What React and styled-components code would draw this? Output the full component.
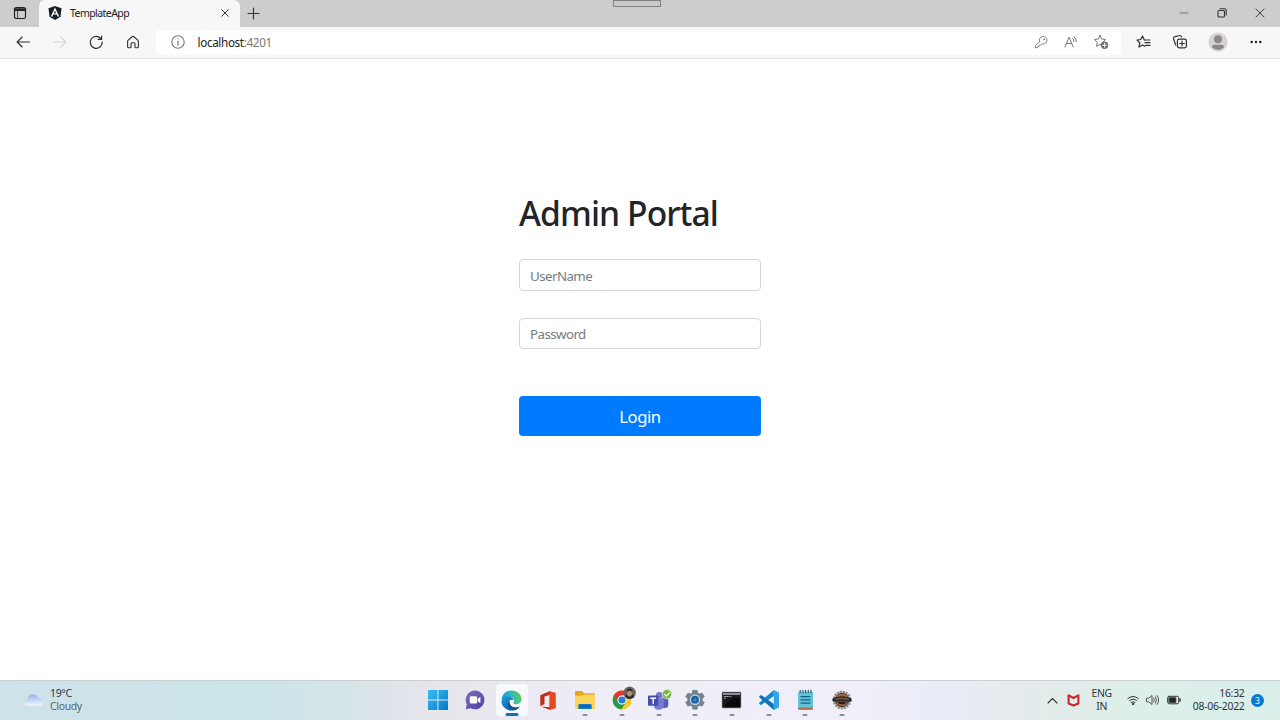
import React from 'react';
import styled, { createGlobalStyle } from 'styled-components';

const Global = createGlobalStyle`
  * { box-sizing: border-box; }
  body { margin: 0; background: #fff; font-family: "Noto Sans", "Open Sans", sans-serif; overflow: hidden; }
`;

const Screen = styled.div`
  width: 1280px;
  height: 720px;
  display: flex;
  flex-direction: column;
  background: #fff;
`;

const TabBar = styled.div`
  position: relative;
  height: 27px;
  display: flex;
  align-items: center;
  padding-bottom: 1px;
  background: #cdcdcd;
`;

const TabMenu = styled.div`
  width: 39px;
  display: flex;
  padding-left: 13px;
`;

const Tab = styled.div`
  width: 201px;
  height: 27px;
  display: flex;
  align-items: center;
  align-self: flex-start;
  padding: 0 11px 1px 9px;
  background: #f7f7f7;
  border-radius: 6px 6px 0 0;
`;

const TabTitle = styled.span`
  flex: 1;
  padding-left: 8px;
  font-size: 10.5px;
  letter-spacing: -0.55px;
  line-height: 16px;
  color: #222;
`;

const NewTab = styled.div`
  display: flex;
  padding-left: 7px;
`;

const GrabHandle = styled.div`
  position: absolute;
  left: 613px;
  top: 0;
  width: 48px;
  height: 7px;
  border: 1px solid #808080;
  background: #c9c9c9;
`;

const WindowControls = styled.div`
  display: flex;
  gap: 26px;
  align-items: center;
  margin-left: auto;
  padding-right: 14px;
`;

const Toolbar = styled.div`
  height: 32px;
  display: flex;
  align-items: center;
  background: #f7f7f7;
  border-bottom: 1px solid #e4e4e4;
`;

const NavButtons = styled.div`
  width: 156px;
  display: flex;
  gap: 20.6px;
  padding: 0 0 1px 15px;
`;

const AddressBar = styled.div`
  width: 965px;
  height: 25px;
  display: flex;
  align-items: center;
  padding: 0 12px 1px 14px;
  background: #fff;
  border-radius: 4px;
`;

const Url = styled.span`
  flex: 1;
  padding-left: 11.5px;
  font-size: 11.7px;
  letter-spacing: -0.35px;
  line-height: 16px;
  color: #222;
`;

const Port = styled.span`
  color: #777;
`;

const AddressActions = styled.div`
  display: flex;
  gap: 14px;
`;

const ToolbarActions = styled.div`
  display: flex;
  align-items: center;
  flex: 1;
  justify-content: space-between;
  padding: 0 16px 1px 15px;
`;

const Page = styled.main`
  flex: 1;
  display: flex;
  justify-content: center;
  align-items: flex-start;
  padding-top: 133px;
`;

const LoginForm = styled.form`
  width: 242px;
  display: flex;
  flex-direction: column;
`;

const Heading = styled.h1`
  margin: 0 0 24px;
  height: 43px;
  font-size: 33.6px;
  font-weight: 500;
  line-height: 43px;
  letter-spacing: -0.9px;
  white-space: nowrap;
  color: #212529;
`;

const Field = styled.input`
  width: 100%;
  height: ${p => p.$height}px;
  margin: 0 0 ${p => p.$gap}px;
  padding: 1px 10px 0;
  font: 13.3px "Noto Sans", sans-serif;
  letter-spacing: -0.55px;
  border: 1px solid #d3d7dc;
  border-radius: 4px;
  outline: 0;
  background: #fff;
  &::placeholder { color: #747c84; opacity: 1; }
`;

const LoginButton = styled.button`
  width: 100%;
  height: 40px;
  padding: 1px 0 0;
  border: 0;
  border-radius: 4px;
  background: #007bff;
  color: #fff;
  font: 16.7px "Noto Sans", sans-serif;
  letter-spacing: -0.45px;
`;

const Taskbar = styled.footer`
  height: 40px;
  display: flex;
  align-items: center;
  padding-bottom: 1px;
  border-top: 1px solid #c9d0d4;
  background: linear-gradient(90deg, #cde2e9 0, #cbe5e8 260px, #d6e4e8 350px, #e6e5eb 430px, #efeef7 600px, #f0eff9 860px, #e8ecf6 950px, #e5ebec 1030px, #dcefe8 1140px, #daeeeb 1280px);
`;

const Weather = styled.div`
  width: 420px;
  display: flex;
  align-items: center;
  gap: 6px;
  padding-left: 23px;
`;

const Lines = styled.div`
  display: flex;
  flex-direction: column;
  align-items: ${p => p.$align || 'flex-start'};
  font-size: 10.4px;
  line-height: 13px;
  letter-spacing: ${p => p.$spacing || 0}px;
  color: #2c3339;
`;

const Muted = styled.span`
  color: #59656c;
`;

const Apps = styled.div`
  display: flex;
  gap: 4.7px;
`;

const AppSlot = styled.div`
  position: relative;
  width: 32px;
  height: 32px;
  margin-left: ${p => p.$first ? 2.4 : 0}px;
  display: flex;
  align-items: center;
  justify-content: center;
  border-radius: 4px;
  background: ${p => p.$active ? '#f8f9fd' : 'transparent'};
`;

const Indicator = styled.i`
  position: absolute;
  bottom: 0;
  left: 50%;
  width: ${p => p.$active ? 13 : 5}px;
  height: ${p => p.$active ? 3 : 2.5}px;
  transform: translateX(-50%);
  border-radius: 2px;
  background: ${p => p.$active ? '#1573b4' : '#8a8a90'};
`;

const Tray = styled.div`
  flex: 1;
  display: flex;
  align-items: center;
  justify-content: flex-end;
  padding-right: 16px;
`;

const TrayItem = styled.div`
  display: flex;
  margin-right: ${p => p.$gap}px;
`;

const Badge = styled.div`
  width: 13px;
  height: 13px;
  border-radius: 50%;
  background: #0879d1;
  color: #fff;
  font-size: 8.5px;
  line-height: 13px;
  text-align: center;
`;

const Svg = styled.svg.attrs(p => ({ viewBox: p.viewBox || '0 0 16 16' }))`
  display: block;
  flex: none;
  width: ${p => p.$w || 16}px;
  height: ${p => p.$h || p.$w || 16}px;
  overflow: visible;
  fill: none;
  stroke: ${p => p.$c || 'none'};
  stroke-width: ${p => p.$s || 1.1};
  stroke-linecap: round;
  stroke-linejoin: round;
`;

const DARK = '#303030';
const GREY = '#777';

const TabMenuIcon = () => (
  <Svg $w={14} viewBox="0 0 14 14" $c="#222" $s={1.2}>
    <rect x="1.5" y="1.5" width="11" height="11" rx="1.8" />
    <path d="M1.5 3h11M2 4.2h10" strokeWidth="1.6" /><path d="M4.6 4.5v8" strokeWidth=".8" />
  </Svg>
);

const AngularIcon = () => (
  <Svg $w={14} $h={14} viewBox="0 0 14 14">
    <path d="M7 0l6.5 2.3-1 8.4L7 14l-5.5-3.3-1-8.4z" fill="#172027" />
    <path d="M7 1.6l4.2 9H9.6L8.7 8.5H5.3l-.9 2.1H2.8zM7 4.6L5.9 7.2h2.2z" fill="#fff" fillRule="evenodd" />
  </Svg>
);

const CloseIcon = ({ size }) => (
  <Svg $w={size} viewBox="0 0 8 8" $c="#333" $s={1}><path d="M.7.7l6.6 6.6M7.3.7L.7 7.3" /></Svg>
);

const StarPath = 'M7 1.3l1.7 3.7 4 .5-3 2.8.8 4L7 10.3l-3.5 2 .8-4-3-2.8 4-.5z';

const NavIcons = () => (
  <NavButtons>
    <Svg $c={DARK}><path d="M14.5 8H2.2M7.2 3L2.1 8l5.1 5" /></Svg>
    <Svg $c="#d5d5d5"><path d="M1.5 8h12.3M8.8 3l5.1 5-5.1 5" /></Svg>
    <Svg $c={DARK} $s={1.2}><path d="M13.2 5A6 6 0 1 0 14.2 8M13.6 2v3.4h-3.5" /></Svg>
    <Svg $c={DARK}><path d="M2.6 7.4Q2.6 6.8 3 6.4L7.4 2.5q.6-.5 1.2 0L13 6.4q.4.4.4 1v5.4q0 1-1 1h-1.7q-.7 0-.7-.8V9.7q0-1-1-1H7q-1 0-1 1V13q0 .8-.8.8H3.6q-1 0-1-1z" /></Svg>
  </NavButtons>
);

const WindowsIcon = () => (
  <Svg $w={20} viewBox="0 0 20 20">
    <defs><linearGradient id="win" x1="0" y1="0" x2="1" y2="1" gradientUnits="objectBoundingBox"><stop stopColor="#37c0ee" /><stop offset="1" stopColor="#0878ca" /></linearGradient></defs>
    <path d="M0 0h9.4v9.4H0zM10.4 0H20v9.4h-9.6zM0 10.4h9.4V20H0zM10.4 10.4H20V20h-9.6z" fill="url(#win)" />
  </Svg>
);

const ChatIcon = () => (
  <Svg $w={20} viewBox="0 0 20 20">
    <defs><linearGradient id="chat" x2="1" y2="1"><stop stopColor="#7b6fc0" /><stop offset="1" stopColor="#4b43a5" /></linearGradient></defs>
    <path d="M10 .5a9.4 9.4 0 1 1-4.2 17.8L.7 19.3 1.8 14.5A9.4 9.4 0 0 1 10 .5z" fill="url(#chat)" />
    <rect x="4.8" y="6.3" width="7.3" height="7.2" rx="1.3" fill="#fff" /><path d="M12.7 8.7l2.7-2v6.5l-2.7-2z" fill="#fff" />
  </Svg>
);

const EdgeIcon = () => (
  <Svg $w={21} viewBox="0 0 21 21">
    <defs>
      <linearGradient id="edgeTop" x1="0" y1=".5" x2="1" y2=".3"><stop stopColor="#1697d8" /><stop offset=".5" stopColor="#30b9bd" /><stop offset="1" stopColor="#65cf53" /></linearGradient>
      <linearGradient id="edgeLow" x2="1" y2="1"><stop stopColor="#1b9ce0" /><stop offset="1" stopColor="#0c4c94" /></linearGradient>
    </defs>
    <path d="M.6 9.3C1.4 3.8 5.5.4 10.6.4 16.6.4 20.6 4.7 20.6 9c0 3.1-2.4 5.2-5.4 5.2-2.7 0-3.4-1-2.4-2.3 1.2-2-.3-4.7-4-4.7C4.9 7.2 2 8.5.6 9.3z" fill="url(#edgeTop)" />
    <path d="M.5 11C.9 7.8 4.2 5.8 8.4 6.7c2.5.5 4.3 2 4.5 3.8-1.2-1-3-1-4.1.1-1.8 1.8.2 6.4 4.6 7 2.3.3 4-.4 5.3-1.1-1.8 2.9-4.8 4.1-7.7 4.1C4.9 20.6.2 15.9.5 11z" fill="url(#edgeLow)" />
    <path d="M8.4 10.9C4.7 14.4 8 20 12.2 20.3c2.7-.3 4.8-1.5 6.5-3.8-3.4 1.7-7.9 1.1-9.6-2.1-.5-1-.7-2.4-.7-3.5z" fill="#155092" />
  </Svg>
);

const OfficeIcon = () => (
  <Svg $w={16} $h={19} viewBox="0 0 16 19">
    <defs><linearGradient id="office" x2="0" y2="1"><stop stopColor="#f06c2b" /><stop offset="1" stopColor="#bd2415" /></linearGradient></defs>
    <path d="M.5 4.3L9.8.3l5.7 1.8v14.8l-5.7 1.8-9.1-3.3 8.8.9V4L4.3 5.4v7.7L.5 14.8z" fill="url(#office)" />
    <path d="M.5 4.3L9.8.3v3.1L4.3 5.4v7.7L.5 14.8z" fill="#b92e1d" /><path d="M9.8.3l5.7 1.8v14.8l-5.7 1.8z" fill="#e8481f" />
  </Svg>
);

const FolderIcon = () => (
  <Svg $w={20} $h={18} viewBox="0 0 20 18">
    <path d="M0 1Q0 0 1 0h6l2.2 2.2H19q1 0 1 1V10H0z" fill="#e9a41e" /><path d="M0 4.8h7.3L9 3.4h10q1 0 1 1V17q0 1-1 1H1q-1 0-1-1z" fill="#ffd45a" />
    <path d="M3.3 18v-3.5q0-1.4 1.4-1.4h10.6q1.4 0 1.4 1.4V18z" fill="#1277c7" /><path d="M6 15.3h8" stroke="#075493" />
  </Svg>
);

const ChromeIcon = () => (
  <Svg $w={20} $h={20} viewBox="0 2 20 20">
    <circle cx="10" cy="12" r="9.4" fill="#fbc823" />
    <path d="M10 12L1.9 7.3A9.4 9.4 0 0 0 9.2 21.4L14 14.2z" fill="#249a4b" />
    <path d="M1.8 7.3A9.4 9.4 0 0 1 18.1 7.3H10L6 14.3z" fill="#e13a2d" />
    <circle cx="10" cy="12" r="4.6" fill="#fff" /><circle cx="10" cy="12" r="3.6" fill="#287de1" />
    <circle cx="17.6" cy="4.8" r="6.2" fill="#66645d" /><path d="M12.6 8.4c1-2 2.6-2.4 5-2.4s4 1 4.8 2.8c-2.8 2.9-7 2.9-9.8-.4z" fill="#30343a" />
    <ellipse cx="17.5" cy="4.9" rx="2.5" ry="3.4" fill="#b88b76" /><path d="M14.8 4.2C14.2-.4 21-.3 20.2 4.2 19 2.4 16.5 2.2 14.8 4.2z" fill="#29251f" />
  </Svg>
);

const TeamsIcon = () => (
  <Svg $w={21} $h={20} viewBox="0 .5 21 20">
    <circle cx="11.3" cy="5.8" r="3.4" fill="#7079d2" /><circle cx="17" cy="7" r="2.3" fill="#545cba" />
    <path d="M14 8.8h6.3v6.5q0 3.2-3.3 3.2h-3z" fill="#565eb8" /><path d="M5.8 8.8h10v6.6q0 4.8-5.3 4.8-4.7 0-4.7-4.8z" fill="#747dd5" />
    <rect x="0" y="6" width="10.3" height="10.3" rx="1" fill="#464cad" /><path d="M2.8 8.7h4.8M5.2 8.7v5.4" stroke="#fff" strokeWidth="1.4" />
    <circle cx="19" cy="4.7" r="4.7" fill="#75b83d" stroke="#dcefd0" strokeWidth=".7" /><path d="M16.7 4.9l1.7 1.7 3-3.2" stroke="#fff" strokeWidth="1.3" />
  </Svg>
);

const SettingsIcon = () => (
  <Svg $w={20} viewBox="0 0 20 20">
    <path d="M8 .4h4l.7 2.8 1.6.9 2.8-.9 2 3.5-2 2v1.8l2 2-2 3.5-2.8-.8-1.6 1-.7 2.9H8l-.7-2.9-1.6-1-2.8.8-2-3.5 2-2V8.7l-2-2 2-3.5 2.8.9 1.6-.9z" fill="#75818b" stroke="#75818b" strokeWidth="1" />
    <circle cx="10" cy="9.7" r="5.2" fill="#c7d6df" /><circle cx="10" cy="9.7" r="3.9" fill="#1762a5" /><circle cx="10" cy="9.7" r="1.5" fill="#438fca" />
  </Svg>
);

const TerminalIcon = () => (
  <Svg $w={19} $h={16} viewBox="0 0 19 16">
    <rect width="19" height="16" rx="1" fill="#17191d" stroke="#909399" strokeWidth=".6" /><path d="M1 1h17v2H1z" fill="#8d9095" />
    <path d="M2.2 4.5h2M5 4.5h1.5M8 4.5h1M2.2 6.3h1.5" stroke="#d9dbdd" strokeWidth=".7" /><path d="M1 15l10-9h7v9z" fill="#08090b" />
  </Svg>
);

const CodeIcon = () => (
  <Svg $w={20} viewBox="0 0 20 20">
    <path d="M14.8 0L20 2.4v15.2L14.8 20 5.5 11.5 2 14.4.2 13.5V6.7L2 5.8l3.5 2.8z" fill="none" />
    <path d="M14.8 0v6L2 15.2.2 13.7v-1z" fill="#1389ca" />
    <path d="M2 4.9l12.8 9.2V20L.2 7.2V6.3z" fill="#1270b7" />
    <path d="M14.8 0L20 2.4v15.2L14.8 20z" fill="#31a5e9" />
  </Svg>
);

const NotepadIcon = () => (
  <Svg $w={15} $h={20} viewBox="0 0 15 20">
    <rect x="0" y="1.7" width="15" height="18" rx="1.2" fill="#61c3dc" /><path d="M.2 17.6h14.6v.9q0 1.3-1.3 1.3H1.2Q0 19.8.2 18z" fill="#b8713d" />
    <path d="M2.2.3v2.5M4.9.3v2.5M7.6.3v2.5M10.3.3v2.5M13 .3v2.5" stroke="#17566d" strokeWidth="1.1" /><path d="M3 6.7h9M3 9.9h9M3 13.1h9" stroke="#145f7d" strokeWidth="1.3" />
  </Svg>
);

const GearBadgeIcon = () => (
  <Svg $w={20} viewBox="0 0 20 20">
    <circle cx="10" cy="10" r="8.4" fill="#b7b5b0" stroke="#858580" strokeWidth="2" strokeDasharray="1.8 1.3" strokeLinecap="butt" />
    <circle cx="10" cy="10" r="6.5" fill="#604033" stroke="#383130" /><path d="M5 6.8c3-2.5 7-2.5 10 0M5 13c3 3 7 3 10 0" stroke="#a6633e" strokeWidth="1.7" />
    <path d="M2.2 9.8q8-2.5 15.6 0" stroke="#202631" strokeWidth="3.8" /><path d="M3.5 9.5q6.5-2 13 0" stroke="#b9824e" strokeWidth="1.4" strokeDasharray="1.2 .8" strokeLinecap="butt" /><path d="M7.5 13h5" stroke="#2a211e" strokeWidth="2" />
  </Svg>
);

const apps = [WindowsIcon, ChatIcon, EdgeIcon, OfficeIcon, FolderIcon, ChromeIcon, TeamsIcon, SettingsIcon, TerminalIcon, CodeIcon, NotepadIcon, GearBadgeIcon];

function Browser() {
  return (
    <>
      <TabBar>
        <TabMenu><TabMenuIcon /></TabMenu>
        <Tab><AngularIcon /><TabTitle>TemplateApp</TabTitle><CloseIcon size={8} /></Tab>
        <NewTab><Svg $w={13} viewBox="0 0 13 13" $c="#333"><path d="M6.5 1v11M1 6.5h11" /></Svg></NewTab>
        <GrabHandle />
        <WindowControls>
          <Svg $w={12} viewBox="0 0 12 12" $c="#777"><path d="M2 6h8" /></Svg>
          <Svg $w={12} viewBox="0 0 12 12" $c="#333"><rect x="2" y="3.5" width="6.5" height="6.5" rx="1" /><path d="M4 1.8h4.5q1.7 0 1.7 1.7V8" /></Svg>
          <Svg $w={12} viewBox="0 0 12 12" $c="#444" $s={1}><path d="M2 2l8 8M10 2l-8 8" /></Svg>
        </WindowControls>
      </TabBar>
      <Toolbar>
        <NavIcons />
        <AddressBar>
          <Svg $c={GREY}><circle cx="8" cy="8" r="6.2" /><path d="M8 7.2v4M8 4.8v.1" strokeWidth="1.2" /></Svg>
          <Url>localhost<Port>:4201</Port></Url>
          <AddressActions>
            <Svg $c={GREY} $s={0.9}><path d="M6.6 7.5a3.8 3.8 0 1 1 2.5 2.3l-1.4 1.3H6.2v1.3H4.9v1.3H2.5v-2.1z" /><circle cx="11.1" cy="5.3" r=".5" /></Svg>
            <Svg $c={GREY} $s={1}><path d="M2 13L6.1 3.1 10.2 13M3.5 9.4h5.2M9.6 4.4q1.5 1.1 1.4 3M11 2.8q2.6 1.7 2.4 4.7" /></Svg>
            <Svg $c={GREY} $s={1}><path d={StarPath} /><circle cx="11.5" cy="11.3" r="3.7" fill="#707070" stroke="none" /><path d="M11.5 9.5v3.6M9.7 11.3h3.6" stroke="#fff" /></Svg>
          </AddressActions>
        </AddressBar>
        <ToolbarActions>
          <Svg $c={DARK} $s={1.2}><path d="M9.3 6.1L8.2 5.8 6.5 2 4.7 5.5l-3.7.6 2.8 2.6-.8 4.4 3.5-2.1 2.2 1.3M9.3 6h4.7M9 8.7h5M9.5 11.4h4.5" /></Svg>
          <Svg $c={DARK} $s={1.2}><rect x="5.4" y="5.1" width="9" height="8.8" rx="1.8" /><path d="M10 7.2v4.6M7.7 9.5h4.6M3.6 10.9L1.6 5Q1 3.3 2.7 2.7l4.5-1.1Q9 1.1 9.7 3" /></Svg>
          <Svg $w={20} viewBox="0 0 20 20"><circle cx="10" cy="10" r="9.5" fill="#d5d2cf" /><circle cx="10" cy="7.2" r="4" fill="#8b8987" /><path d="M4 15.2q0-2.5 2.5-2.5h7q2.5 0 2.5 2.5-5.3 5.7-12 0z" fill="#8b8987" /></Svg>
          <Svg><g fill="#222"><circle cx="3.7" cy="8" r="1.2" /><circle cx="8" cy="8" r="1.2" /><circle cx="12.3" cy="8" r="1.2" /></g></Svg>
        </ToolbarActions>
      </Toolbar>
    </>
  );
}

export default function App() {
  return (
    <Screen>
      <Global />
      <Browser />
      <Page>
        <LoginForm>
          <Heading>Admin Portal</Heading>
          <Field placeholder="UserName" $height={32} $gap={27} />
          <Field placeholder="Password" type="password" $height={31} $gap={47} />
          <LoginButton type="button">Login</LoginButton>
        </LoginForm>
      </Page>
      <Taskbar>
        <Weather>
          <Svg $w={21} $h={13} viewBox="0 0 21 13">
            <defs><linearGradient id="cloud" x2="0" y2="1"><stop stopColor="#8fb5e8" /><stop offset=".55" stopColor="#c4d8f5" /><stop offset="1" stopColor="#f5f5fc" /></linearGradient></defs>
            <path d="M4.5 11.8C-.8 11.8-.4 5.8 4.3 5.6 5.2-1.2 14.2-1.4 15.5 4.6c6-.6 6.8 7.2 1.5 7.2z" fill="url(#cloud)" />
          </Svg>
          <Lines $spacing={-0.3}><span>19°C</span><Muted>Cloudy</Muted></Lines>
        </Weather>
        <Apps>
          {apps.map((Icon, i) => (
            <AppSlot key={i} $first={i === 0} $active={i === 2}>
              <Icon />
              {(i === 2 || i > 3) && <Indicator $active={i === 2} />}
            </AppSlot>
          ))}
        </Apps>
        <Tray>
          <TrayItem $gap={9}><Svg $w={11} $h={7} viewBox="0 0 11 7" $c="#333"><path d="M1 6l4.5-4.5L10 6" /></Svg></TrayItem>
          <TrayItem $gap={12}><Svg $w={13} $h={14} viewBox="0 0 13 14" $c="#c52733" $s={2.1}><path d="M1.6 2.3v8.2l4.9 2 4.9-2V2.3L6.5 5z" /></Svg></TrayItem>
          <TrayItem $gap={15}><Lines $align="center" $spacing={-0.3}><span>ENG</span><span>IN</span></Lines></TrayItem>
          <TrayItem $gap={7}><Svg $w={12} $h={12} viewBox="0 0 12 12" $c="#333" $s={1}><path d="M.8 4.5q5.2-4.2 10.4 0M2.5 6.5q3.5-2.8 7 0M4.1 8.4q1.9-1.5 3.8 0" /><circle cx="6" cy="10" r=".7" fill="#333" /></Svg></TrayItem>
          <TrayItem $gap={8}><Svg $w={13} $h={12} viewBox="0 0 13 12" $c="#444" $s={0.9}><path d="M.8 4.2h2L6 1.5v9L2.8 7.8h-2zM7.8 4.2q1.2 1.8 0 3.6M9.5 2.8q2.1 3.2 0 6.4M11.2 1.5q3 4.5 0 9" /></Svg></TrayItem>
          <TrayItem $gap={12}><Svg $w={14} $h={10} viewBox="0 0 14 10" $c="#333" $s={1}><rect x=".7" y="1.3" width="11" height="7.5" rx="1.5" /><path d="M2.3 2.8h6.5v4.5H2.3z" fill="#222" /><path d="M13 4v2" strokeWidth="1.5" /></Svg></TrayItem>
          <TrayItem $gap={6.5}><Lines $align="flex-end" $spacing={-0.26}><span>16:32</span><span>08-06-2022</span></Lines></TrayItem>
          <Badge>3</Badge>
        </Tray>
      </Taskbar>
    </Screen>
  );
}
